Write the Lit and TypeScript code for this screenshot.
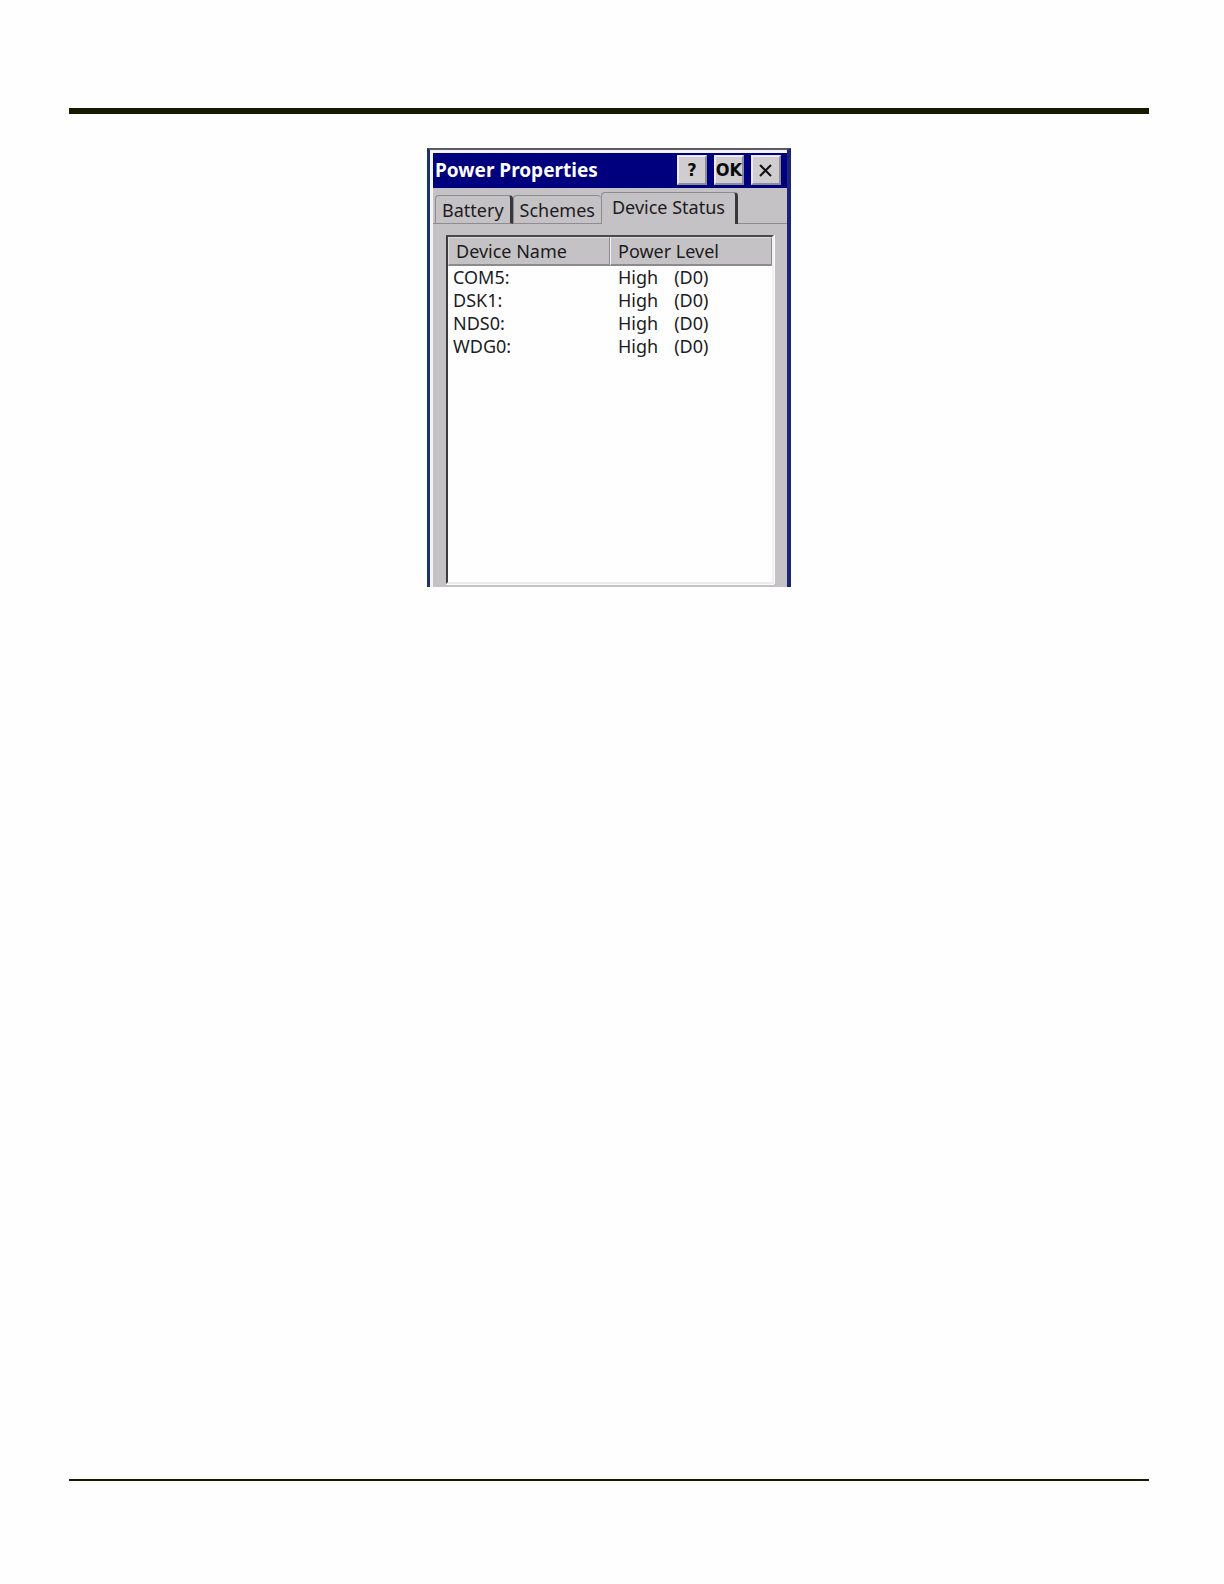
import { LitElement, html, css } from 'lit'
import { customElement, property, state } from 'lit/decorators.js'
import { classMap } from 'lit/directives/class-map.js'

interface Device {
  name: string
  level: string
  code: string
}

const DEVICES: Device[] = [
  { name: 'COM5:', level: 'High', code: '(D0)' },
  { name: 'DSK1:', level: 'High', code: '(D0)' },
  { name: 'NDS0:', level: 'High', code: '(D0)' },
  { name: 'WDG0:', level: 'High', code: '(D0)' },
]

const TABS = ['Battery', 'Schemes', 'Device Status']

/**
 * List of devices with their current power level
 */
@customElement('device-list')
export class DeviceList extends LitElement {
  @property({ attribute: false }) devices: Device[] = []

  static styles = css`
    :host {
      display: block;
      min-height: 345px;
      background: #fefefe;
      border: 2px solid;
      border-color: #4a4a4c #f1f1f2 #ececec #3c3c3e;
    }

    table {
      width: 100%;
      border-collapse: separate;
      border-spacing: 0;
      table-layout: fixed;
    }

    th,
    td {
      padding: 0 0 0 5px;
      font-weight: 400;
      text-align: left;
      white-space: nowrap;
    }

    th {
      height: 29px;
      box-sizing: border-box;
      padding: 1px 0 0 7px;
      line-height: 25px;
      background: #c4c2c5;
      border: solid;
      border-width: 1px 1px 2px;
      border-color: #dddbde #8c8a8d #8c8a8d #f4f4f6;
    }

    th:first-child {
      border-left-color: #dddbde;
    }

    .name {
      width: 162px;
    }

    td {
      line-height: 23px;
    }

    td.level {
      padding-left: 8px;
    }

    .code {
      margin-left: 16px;
    }
  `

  render() {
    return html`
      <table>
        <thead>
          <tr>
            <th class="name" scope="col">Device Name</th>
            <th scope="col">Power Level</th>
          </tr>
        </thead>
        <tbody>
          ${this.devices.map(
            (device) => html`
              <tr>
                <td>${device.name}</td>
                <td class="level">${device.level}<span class="code">${device.code}</span></td>
              </tr>
            `
          )}
        </tbody>
      </table>
    `
  }
}

/**
 * Power Properties dialog: title bar, tabs and the open panel
 */
@customElement('power-dialog')
export class PowerDialog extends LitElement {
  @state() private active = 'Device Status'

  static styles = css`
    :host {
      display: block;
      box-sizing: border-box;
      width: 364px;
      max-width: 100%;
      margin: 0 auto;
      border: solid;
      border-width: 2px 4px 0 3px;
      border-color: #5c5c60 #1c2478 #5c5c60 #1f3268;
      color: #1c1c1e;
      font: 18px/24px 'Noto Sans', 'Open Sans', sans-serif;
    }

    .frame {
      border: solid #f4f3f8;
      border-width: 3px 0 0 3px;
      background: #c4c2c5;
    }

    .title-bar {
      display: flex;
      align-items: center;
      gap: 7px;
      height: 35px;
      padding: 0 6px 1px 2px;
      box-sizing: border-box;
      background: #00007e;
    }

    h1 {
      flex: 1;
      margin: 0;
      color: #fff;
      font: 700 19px/24px 'Noto Sans', 'Open Sans', sans-serif;
      white-space: nowrap;
    }

    .title-bar button {
      display: flex;
      align-items: center;
      justify-content: center;
      width: 30px;
      height: 30px;
      padding: 0;
      background: #cfcdd0;
      border: 2px solid;
      border-color: #eceaf0 #8f8d98 #8f8d98 #eceaf0;
      color: #0a0a0a;
      font: 700 18px/24px 'DejaVu Sans Condensed', 'Noto Sans', sans-serif;
    }

    .tabs {
      display: flex;
      align-items: flex-end;
      height: 36px;
      padding-left: 2px;
      box-shadow: inset 0 -1px #8e8c90;
    }

    .tab {
      height: 29px;
      box-sizing: border-box;
      padding: 0 6px;
      background: #c4c2c5;
      border: solid;
      border-width: 1px 3px 1px 1px;
      border-color: #8e8c90 #38383a #8e8c90 #8e8c90;
      border-radius: 4px 4px 0 0;
      color: inherit;
      font: inherit;
      white-space: nowrap;
    }

    .tab.before-active {
      border-right-width: 0;
    }

    .tab.active {
      height: 32px;
      padding: 0 10px 4px;
      border-bottom: 0;
    }

    .panel {
      padding: 11px 13px 3px;
    }

    device-list {
      box-shadow: 0 1px #fafafa, 1px 0 #fafafa;
    }
  `

  render() {
    const activeIndex = TABS.indexOf(this.active)

    return html`
      <div class="frame">
        <div class="title-bar">
          <h1>Power Properties</h1>
          <button type="button" aria-label="Help">?</button>
          <button type="button">OK</button>
          <button type="button" aria-label="Close">
            <svg width="14" height="14" viewBox="0 0 14 14" aria-hidden="true">
              <path d="M1 2L12 13M12 2L1 13" stroke="#111" stroke-width="2" />
            </svg>
          </button>
        </div>
        <div class="tabs" role="tablist">
          ${TABS.map(
            (tab, i) => html`
              <button
                type="button"
                role="tab"
                aria-selected=${tab === this.active ? 'true' : 'false'}
                class=${classMap({
                  tab: true,
                  active: i === activeIndex,
                  'before-active': i === activeIndex - 1,
                })}
                @click=${() => (this.active = tab)}
              >
                ${tab}
              </button>
            `
          )}
        </div>
        <div class="panel" role="tabpanel">
          <device-list .devices=${DEVICES}></device-list>
        </div>
      </div>
    `
  }
}

@customElement('app-root')
export class AppRoot extends LitElement {
  static styles = css`
    :host {
      display: flex;
      flex-direction: column;
      box-sizing: border-box;
      min-height: 100vh;
      padding: 108px 75px 103px 69px;
      background: #fefefe;
    }

    hr {
      width: 100%;
      height: 2px;
      margin: 0;
      border: 0;
      background: #171a00;
    }

    .top {
      height: 6px;
      margin-bottom: 34px;
    }

    main {
      flex: 1;
    }
  `

  render() {
    return html`
      <hr class="top" />
      <main>
        <power-dialog></power-dialog>
      </main>
      <hr />
    `
  }
}
